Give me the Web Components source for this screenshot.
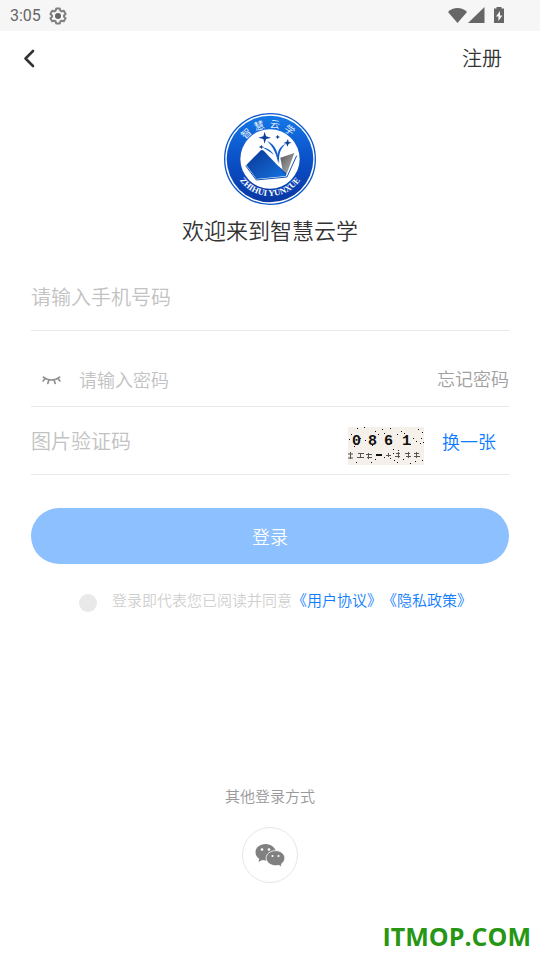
<!DOCTYPE html>
<html lang="zh-CN">
<head>
<meta charset="utf-8">
<meta name="viewport" content="width=device-width, initial-scale=1">
<title>登录</title>
<style>
    body {
        margin: 0;
        background: #fff;
        color: #333;
        font-family: Roboto, "Noto Sans CJK SC", sans-serif;
        text-spacing-trim: space-all;
    }
</style>
</head>
<body>
<login-page>
    <status-bar slot="status">3:05</status-bar>
    <nav-bar slot="nav">注册</nav-bar>
    <brand-header slot="main">欢迎来到智慧云学</brand-header>
    <login-form slot="main"></login-form>
    <social-login slot="bottom">其他登录方式</social-login>
    <site-mark slot="bottom">ITMOP.COM</site-mark>
</login-page>

<script>
function template(html) {
    const element = document.createElement('template');
    element.innerHTML = html;
    return element;
}

class BaseElement extends HTMLElement {
    connectedCallback() {
        if (this.shadowRoot) {
            return;
        }
        this.attachShadow({mode: "open"});
        this.shadowRoot.appendChild(this.constructor.template.content.cloneNode(true));
        this.update();
    }

    update() {
    }
}

class LoginPage extends BaseElement {
    static template = template(`
        <style>
        :host {
            display: flex;
            flex-direction: column;
            min-height: 100vh;
            font-weight: 350;
        }
        main {
            flex: 1;
            padding: 26px 31px 0;
        }
        footer {
            display: flex;
            flex-direction: column;
        }
        </style>
        <slot name="status"></slot>
        <slot name="nav"></slot>
        <main><slot name="main"></slot></main>
        <footer><slot name="bottom"></slot></footer>
    `);
}

class StatusBar extends BaseElement {
    static template = template(`
        <style>
        :host {
            display: flex;
            align-items: center;
            height: 31px;
            padding: 0 34px 0 10px;
            background: #f6f6f6;
            color: #666;
            font-size: 16px;
            font-weight: 400;
        }
        svg { display: block; }
        .gear { margin-left: 8px; }
        .icons {
            display: flex;
            align-items: center;
            margin-left: auto;
        }
        </style>
        <span><slot></slot></span>
        <svg class="gear" width="18" height="18" viewBox="0 0 18 18" fill="none" stroke="#808080">
            <path stroke-width="2" stroke-linejoin="round" d="M7.2 1.5h3.6l.6 2.2 1.2.7 2.2-.7 1.8 3.2L15 8.4v1.3l1.6 1.5-1.8 3.1-2.2-.6-1.2.7-.6 2.1H7.2l-.6-2.1-1.2-.7-2.2.6-1.8-3.1L3 9.700V8.400L1.400 6.900l1.800-3.200 2.200.7 1.200-.7z"/>
            <circle cx="9" cy="9" r="3" fill="#666" stroke="none"/>
        </svg>
        <div class="icons">
            <svg width="58" height="18" viewBox="0 0 58 18" fill="#666">
                <path d="M0 5C5-.3 14-.3 19 5L9.500 16z"/>
                <path d="M36.500 0v16H20z"/>
                <path fill-rule="evenodd" d="M48.500 0h5v1.500H56V16H46V1.500h2.500zM52 4l-4 5.600h2.400V14l4-5.600H52z"/>
            </svg>
        </div>
    `);
}

class NavBar extends BaseElement {
    static template = template(`
        <style>
        :host {
            display: flex;
            align-items: center;
            justify-content: space-between;
            height: 56px;
            padding: 0 38px 0 14px;
        }
        button {
            display: flex;
            padding: 4px;
            border: 0;
            background: none;
        }
        a {
            color: #333;
            font-size: 20px;
            line-height: 28px;
            text-decoration: none;
        }
        </style>
        <button type="button" aria-label="返回">
            <svg width="22" height="22" viewBox="0 0 22 22" fill="none" stroke="#333" stroke-width="2.6" stroke-linecap="round" stroke-linejoin="round">
                <path d="M15 3L7.500 10.500 15 18"/>
            </svg>
        </button>
        <a href="#register"><slot></slot></a>
    `);
}

class BrandHeader extends BaseElement {
    static template = template(`
        <style>
        :host {
            display: flex;
            flex-direction: column;
            align-items: center;
            gap: 12px;
        }
        h1 {
            margin: 0;
            color: #333;
            font-size: 22px;
            font-weight: inherit;
            line-height: 30px;
        }
        .name {
            font-family: "Noto Sans CJK SC", sans-serif;
            font-size: 30px;
        }
        .latin {
            font-family: "Liberation Serif", serif;
            font-size: 26px;
            font-weight: 700;
        }
        </style>
        <svg width="92" height="92" viewBox="27 26 276 276" fill="none">
            <defs>
                <linearGradient id="ring" x1="0" y1="0" x2="0" y2="1">
                    <stop offset="0" stop-color="#1478e6"/>
                    <stop offset=".5" stop-color="#0b50c8"/>
                    <stop offset="1" stop-color="#0838a4"/>
                </linearGradient>
                <linearGradient id="book" x1="0" y1="0" x2="1" y2="1">
                    <stop offset="0" stop-color="#0a3594"/>
                    <stop offset="1" stop-color="#1474e0"/>
                </linearGradient>
                <linearGradient id="leaf" x1="0" y1="0" x2="1" y2="1">
                    <stop offset="0" stop-color="#555"/>
                    <stop offset="1" stop-color="#bbb"/>
                </linearGradient>
                <path id="lower" d="M54 164a111 111 0 0 0 222 0"/>
            </defs>
            <circle cx="165" cy="164" r="136" fill="#fff" stroke="#0c58ca" stroke-width="4"/>
            <circle cx="165" cy="164" r="130" fill="url(#ring)"/>
            <circle cx="165" cy="164" r="89" fill="#fff"/>
            <g class="name" fill="#fff" text-anchor="middle">
                <text x="165" y="70" transform="rotate(-43 165 164)">智</text>
                <text x="165" y="70" transform="rotate(-18 165 164)">慧</text>
                <text x="165" y="70" transform="rotate(8 165 164)">云</text>
                <text x="165" y="70" transform="rotate(34 165 164)">学</text>
            </g>
            <text class="latin" fill="#fff" text-anchor="middle"><textPath href="#lower" startOffset="50%">ZHIHUI YUNXUE</textPath></text>
            <path fill="url(#book)" d="M94 182l42-43q5-5 11 1l36 38 30 37-89 9z"/>
            <path stroke="#1053b8" stroke-width="3" d="M92 184l32 43 92-9 29-64"/>
            <path fill="#0d57c4" d="M182 178l33 28-3 10z"/>
            <path fill="url(#leaf)" d="M196 160l42-14-22 61-13-9z"/>
            <path fill="#1260cc" d="M156 109c26 12 36 38 34 70-5-29-15-51-34-70zM213 118c-17 13-23 34-20 58-11-28-3-49 20-58zM142 129c17 3 27 9 34 23-10-9-20-15-34-23z"/>
            <path fill="#0c3f9c" d="M149 82l4 14 15 4-15 4-4 14-4-14-15-4 15-4zM219 104l2 9 9 2-9 3-4 9-3-9-9-2 9-3zM139 121l2 5 6 2-6 2-2 5-2-5-6-2 6-2zM188 91l2 5 5 2-5 2-2 5-2-5-5-2 5-2z"/>
        </svg>
        <h1><slot></slot></h1>
    `);
}

class FormField extends BaseElement {
    static template = template(`
        <style>
        :host {
            display: flex;
            align-items: center;
            box-sizing: border-box;
            height: 68px;
            border-bottom: 1px solid #e8e8e8;
            font-size: 20px;
        }
        input {
            flex: 1;
            min-width: 0;
            height: 34px;
            padding: 2px 0 0;
            box-sizing: border-box;
            border: 0;
            outline: 0;
            background: none;
            color: #333;
            font: inherit;
        }
        input::placeholder {
            color: #c2c2c2;
            opacity: 1;
        }
        </style>
        <slot name="before"></slot>
        <input>
        <slot name="after"></slot>
    `);

    update() {
        const input = this.shadowRoot.querySelector("input");
        input.type = this.getAttribute("type") || "text";
        input.placeholder = this.getAttribute("placeholder");
        input.setAttribute("aria-label", input.placeholder);
    }
}

class CaptchaImage extends BaseElement {
    static template = template(`
        <style>
        :host { display: block; }
        svg { display: block; }
        text {
            font-family: "Liberation Mono", monospace;
            font-size: 15px;
            font-weight: 700;
        }
        </style>
        <svg width="76" height="38" viewBox="0 0 76 38" fill="#111">
            <rect width="76" height="38" fill="#f5f0ea"/>
            <text x="4" y="18">0</text>
            <text x="20" y="18">8</text>
            <text x="36" y="18">6</text>
            <text x="54" y="18">1</text>
            <path stroke="#555" d="M0 27h5M0 31h5M2.500 25v7M10 26.500h6M9 30.500h7M12.500 26v5M18 27.500h6M19 30.500h5M20.500 26v6M38 28.500h5M40.500 26v4M48 26.500h4M47 29.500h5M50.500 25v6M57 26.500h5M58 29.500h5M60.500 25v6M66 26.500h5M66 29.500h6M68.500 25v6"/>
            <rect x="28" y="27" width="6" height="2"/>
            <g id="dots"></g>
        </svg>
    `);

    update() {
        const dots = [
            [9, 1], [16, 0], [27, 4], [34, 2], [42, 1], [53, 4], [70, 2], [74, 5], [3, 7], [1, 12],
            [5, 14], [12, 11], [17, 13], [30, 7], [36, 6], [49, 7], [56, 6], [65, 11], [68, 14], [73, 11],
            [75, 15], [6, 19], [24, 18], [43, 16], [62, 17], [72, 16], [45, 22], [50, 23], [8, 35], [23, 35],
            [27, 32], [36, 30], [45, 26], [46, 33], [49, 35], [55, 32], [62, 36], [67, 34], [74, 33], [42, 31]
        ];
        this.shadowRoot.getElementById("dots").innerHTML = dots
            .map(([x, y]) => `<rect x="${x}" y="${y}" width="1" height="1"/>`)
            .join("");
    }
}

class AgreementCheck extends BaseElement {
    static template = template(`
        <style>
        :host {
            display: flex;
            align-items: flex-end;
            gap: 15px;
            padding-left: 48px;
            font-size: 15px;
            line-height: 22px;
            color: #d0d0d0;
        }
        input {
            flex: none;
            width: 18px;
            height: 18px;
            margin: 0;
            border-radius: 50%;
            background: #e9e9e9;
            appearance: none;
        }
        input:checked { background: #1a82fb; }
        a {
            color: #0f7dff;
            text-decoration: none;
        }
        </style>
        <input type="checkbox" id="agree">
        <div><label for="agree">登录即代表您已阅读并同意</label><a href="#terms">《用户协议》</a><a href="#privacy">《隐私政策》</a></div>
    `);
}

class LoginForm extends BaseElement {
    static template = template(`
        <style>
        :host {
            display: block;
            margin-top: 16px;
        }
        .password {
            height: 76px;
            padding-top: 22px;
            font-size: 18px;
        }
        .eye {
            display: flex;
            margin-right: 18px;
            padding: 0 0 0 11px;
            border: 0;
            background: none;
        }
        a {
            color: #a0a0a0;
            font-size: 18px;
            line-height: 24px;
            text-decoration: none;
        }
        .code {
            display: flex;
            align-items: center;
            gap: 18px;
            padding-right: 13px;
        }
        captcha-image { padding-top: 10px; }
        .change {
            padding-top: 4px;
            color: #0f7dff;
        }
        .submit {
            display: block;
            width: 100%;
            height: 56px;
            margin: 33px 0 26px;
            padding: 0;
            border: 0;
            border-radius: 28px;
            background: #8cc0ff;
            color: #fff;
            font: inherit;
            font-size: 18px;
        }
        </style>
        <form>
            <form-field type="tel" placeholder="请输入手机号码"></form-field>
            <form-field class="password" type="password" placeholder="请输入密码">
                <button class="eye" slot="before" type="button" aria-label="显示密码">
                    <svg width="19" height="12" viewBox="0 0 20 12" fill="none" stroke="#909090" stroke-width="1.800" stroke-linecap="round">
                        <path d="M1.500 3C6 7 14 7 18.500 3M3.200 4.500L1.200 7M7.200 6.200L6.200 9.500M12.800 6.200l1 3.300M16.800 4.500l2 2.500"/>
                    </svg>
                </button>
                <a slot="after" href="#forgot">忘记密码</a>
            </form-field>
            <form-field placeholder="图片验证码">
                <div class="code" slot="after">
                    <captcha-image></captcha-image>
                    <a class="change" href="#captcha">换一张</a>
                </div>
            </form-field>
            <button class="submit" type="submit">登录</button>
            <agreement-check></agreement-check>
        </form>
    `);

    update() {
        this.shadowRoot.querySelector("form").addEventListener("submit", (event) => event.preventDefault());
    }
}

class SocialLogin extends BaseElement {
    static template = template(`
        <style>
        :host {
            display: flex;
            flex-direction: column;
            align-items: center;
            gap: 19px;
            color: #999;
            font-size: 15px;
            line-height: 22px;
        }
        button {
            display: flex;
            align-items: center;
            justify-content: center;
            width: 56px;
            height: 56px;
            padding: 0;
            border: 1px solid #e6e6e6;
            border-radius: 50%;
            background: #fff;
        }
        </style>
        <span><slot></slot></span>
        <button type="button" aria-label="微信登录">
            <svg width="30" height="24" viewBox="0 0 30 24" fill="#808080">
                <path d="M10.500 1C4.800 1 .5 4.600.5 9.300c0 2.700 1.400 4.900 3.700 6.400L3.600 19l3.600-2c1 .3 2.100.4 3.300.4 5.700 0 10.300-3.500 10.300-8.100S16.200 1 10.500 1z"/>
                <path stroke="#fff" stroke-width=".8" d="M20.600 7.600c-5 0-9.500 3.200-9.500 7.500s4.500 7.600 9.500 7.600c1 0 2-.1 2.900-.4l3.200 1.700-.4-2.900c2-1.400 3.500-3.500 3.500-6 0-4.300-4.300-7.500-9.200-7.500z"/>
                <g fill="#fff">
                    <circle cx="7" cy="6.500" r="1.300"/>
                    <circle cx="14" cy="6.500" r="1.300"/>
                    <circle cx="17.500" cy="13" r="1.100"/>
                    <circle cx="23.500" cy="13" r="1.100"/>
                </g>
            </svg>
        </button>
    `);
}

class SiteMark extends BaseElement {
    static template = template(`
        <style>
        :host {
            display: block;
            padding: 35px 9px 6px;
            color: #279614;
            font-family: "Open Sans", sans-serif;
            font-size: 25px;
            font-weight: 700;
            line-height: 36px;
            text-align: right;
        }
        </style>
        <slot></slot>
    `);
}

window.customElements.define('login-page', LoginPage);
window.customElements.define('status-bar', StatusBar);
window.customElements.define('nav-bar', NavBar);
window.customElements.define('brand-header', BrandHeader);
window.customElements.define('form-field', FormField);
window.customElements.define('captcha-image', CaptchaImage);
window.customElements.define('agreement-check', AgreementCheck);
window.customElements.define('login-form', LoginForm);
window.customElements.define('social-login', SocialLogin);
window.customElements.define('site-mark', SiteMark);
</script>
</body>
</html>
